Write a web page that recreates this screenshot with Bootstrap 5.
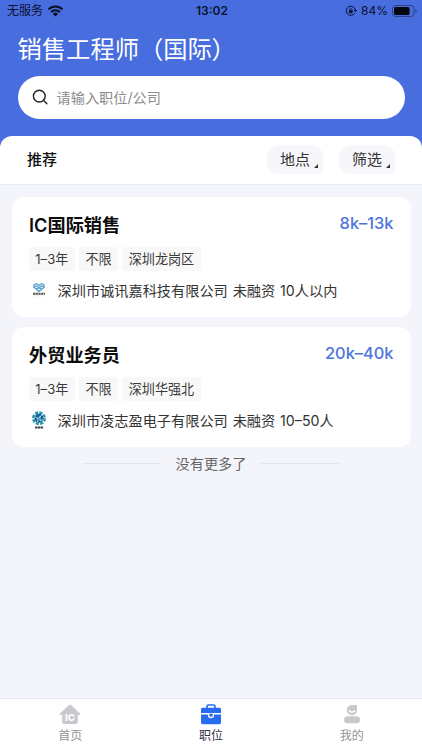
<!DOCTYPE html>
<html lang="zh-CN">
<head>
<meta charset="utf-8">
<meta name="viewport" content="width=device-width, initial-scale=1">
<title>销售工程师（国际）</title>
<link href="https://cdn.jsdelivr.net/npm/bootstrap@5.3.0/dist/css/bootstrap.min.css" rel="stylesheet">
<style>
body{font-family:Inter,"Noto Sans CJK SC",sans-serif;background:#f4f5fa;color:#333;height:750px;overflow:hidden}
svg{display:block;flex:none}
.top-area{background:#486ddf;height:148px}
.status{height:22px;padding:0 5px 0 7px;font-size:12px;color:#0b1230;display:grid;grid-template-columns:1fr auto 1fr}
.page-title{font-size:24.3px;line-height:32px;margin:11px 17.5px 0;font-weight:400}
.page-title span{letter-spacing:-.5px}
.search{height:43.5px;margin:10.5px 17.5px 0;padding-left:14px;font-size:14.2px;color:#8c8c8c}
.search span{margin-left:9px}
.filters{height:49px;margin-top:-12.5px;border-radius:12px 12px 0 0;padding:0 27px;border-bottom:1px solid #e9eaef}
.tab-name{font-size:15px;font-weight:500;color:#111;padding-top:1px}
.pill{width:56px;height:29.5px;border-radius:12px 12px 2px 12px;background:#f7f7fb;font-size:15px;color:#333;padding:1px 5px 0 13px}
.pill svg{margin-top:11px}
.job{height:119.5px;border-radius:12px;padding:15px 17px 0 17.5px}
.jobs{padding:12.5px 11.5px 0;gap:10.5px}
.job-title{font-size:18.2px;line-height:26px;font-weight:700;color:#0c0c0c}
.job-title .latin{font-weight:600}
.pay{font-size:16.4px;line-height:22px;font-weight:500;color:#4c74dd}
.tags{margin-top:9px;gap:4.5px}
.tag{height:24px;padding:0 6.3px;background:#f8f8f8;font-size:13.1px;line-height:24px;color:#3b3b3b;border-radius:2px}
.firm{font-size:14.2px;line-height:20px;margin-top:10px;color:#333;word-spacing:.9px}
.firm svg{margin:0 8.5px 0 0}
.end-line{width:78px;height:1px;background:#e4e5ea}
.the-end{gap:15px;font-size:14.2px;line-height:20px;margin-top:7px;color:#666}
.tabbar{height:52px;border-top:1px solid #e6e6ea;font-size:12px;line-height:16px;color:#929296}
.tabbar svg{margin:5px auto 3px}
.tabbar .on{color:#33344a}
</style>
<script src="https://cdn.jsdelivr.net/npm/bootstrap@5.3.0/dist/js/bootstrap.bundle.min.js"></script>
</head>
<body class="d-flex flex-column">
<header class="top-area flex-shrink-0">
  <div class="status align-items-center">
    <div class="d-flex align-items-center gap-1"><span>无服务</span>
      <svg width="17" height="12" viewBox="0 0 17 12" fill="none" stroke="#080d20" stroke-width="2"><path d="M1.5 4.4a10 10 0 0 1 14 0M4 7a6.4 6.4 0 0 1 9 0"/><path d="M8.5 11.5 5.9 8.9a3.7 3.7 0 0 1 5.2 0z" fill="#080d20" stroke="none"/></svg>
    </div>
    <div class="fw-semibold time">13:02</div>
    <div class="d-flex align-items-center justify-content-end">
      <svg width="12" height="12" viewBox="0 0 12 12" fill="none" stroke="#0b1230"><path d="M9.8 8.2A4.6 4.6 0 1 1 10.4 5"/><path d="M8.7 5h3.3l-1.6 2.2z" fill="#0b1230" stroke="none"/><path d="M4.7 5.5V4.7a1.1 1.1 0 0 1 2.2 0v.8" stroke-width=".8"/><rect x="3.9" y="5.3" width="3.8" height="3" rx=".5" fill="#0b1230" stroke="none"/></svg>
      <span class="ms-1">84%</span>
      <svg class="ms-1" width="25" height="12" viewBox="0 0 25 12"><rect x=".5" y=".5" width="21.5" height="11" rx="3" fill="none" stroke="#2c438c"/><rect x="2" y="2" width="15.5" height="8" rx="1.6" fill="#05070f"/><path d="M23.3 4v4q1.4-.6 1.4-2t-1.4-2" fill="#2c438c"/></svg>
    </div>
  </div>
  <h1 class="page-title text-white">销售工程师（国<span>际</span>）</h1>
  <div class="search bg-white rounded-pill d-flex align-items-center">
    <svg width="16" height="16" viewBox="0 0 16 16" fill="none" stroke="#222" stroke-width="1.4" stroke-linecap="round"><circle cx="7.3" cy="7.1" r="5.9"/><path d="m11.6 11.4 3.3 3.3"/></svg>
    <span>请输入职位/公司</span>
  </div>
</header>
<section class="filters bg-white flex-shrink-0 d-flex align-items-center">
  <div class="tab-name me-auto">推荐</div>
  <div class="d-flex gap-3">
    <div class="pill d-flex align-items-center justify-content-between">地点<svg width="4" height="4"><path d="M4 0v4H0z" fill="#333"/></svg></div>
    <div class="pill d-flex align-items-center justify-content-between">筛选<svg width="4" height="4"><path d="M4 0v4H0z" fill="#333"/></svg></div>
  </div>
</section>
<main class="jobs d-flex flex-column">
  <article class="job bg-white">
    <div class="d-flex justify-content-between"><h2 class="job-title m-0"><span class="latin">IC</span>国际销售</h2><div class="pay">8k–13k</div></div>
    <div class="tags d-flex"><span class="tag">1–3年</span><span class="tag">不限</span><span class="tag">深圳龙岗区</span></div>
    <div class="firm d-flex align-items-center">
      <svg width="20" height="20" viewBox="0 0 20 20"><path d="M10 10.5 4.8 6.2 5 3.7l2.5-1.1L10 4.5l2.5-1.9L15 3.7l.2 2.5zM5 6l2.5-1.2L10 7l2.5-2.2L15 6M7.5 8 10 7l2.5 1" fill="#e3f1f8" stroke="#4d9cc8" stroke-width="1.1"/><path d="M4 12.8h12" stroke="#555" stroke-width="2" stroke-dasharray="2.2 .5"/><path d="M4 14.8h12" stroke="#e9dede" stroke-width=".7"/></svg>
      <span>深圳市诚讯嘉科技有限公司 未融资 10人以内</span></div>
  </article>
  <article class="job bg-white">
    <div class="d-flex justify-content-between"><h2 class="job-title m-0">外贸业务员</h2><div class="pay">20k–40k</div></div>
    <div class="tags d-flex"><span class="tag">1–3年</span><span class="tag">不限</span><span class="tag">深圳华强北</span></div>
    <div class="firm d-flex align-items-center">
      <svg width="20" height="20" viewBox="0 0 20 20"><circle cx="10" cy="7.2" r="5.8" fill="none" stroke="#2599ad" stroke-width="2.4" stroke-dasharray="3.2 1.3"/><circle cx="10" cy="7.2" r="4.6" fill="#19639b"/><path d="m6 6 3 1.5L8.5 11M9 7.5l4-3.5M11 5v5l3-1.5" fill="none" stroke="#b9e2ec" stroke-width=".9"/><path d="M6 16.5h8.5" stroke="#444" stroke-width="2" stroke-dasharray="2.4 .4"/></svg>
      <span>深圳市凌志盈电子有限公司 未融资 10–50人</span></div>
  </article>
</main>
<div class="the-end d-flex align-items-center justify-content-center"><i class="end-line"></i><span>没有更多了</span><i class="end-line"></i></div>
<nav class="tabbar bg-white flex-shrink-0 row g-0 text-center mt-auto">
  <div class="col-4"><svg width="22" height="21" viewBox="0 0 22 21"><path d="M10 1.1a1.5 1.5 0 0 1 2 0l9 8.3q1 1.4-.6 1.6h-1.6v7.3q0 1.7-1.7 1.7H4.9q-1.7 0-1.7-1.7V11H1.6Q0 10.8 1 9.4z" fill="#c8c9cf"/><text x="11" y="17" text-anchor="middle" font-size="9.5" font-weight="800" fill="#fff">IC</text></svg>首页</div>
  <div class="col-4 on"><svg width="20" height="21" viewBox="0 0 20 21"><path d="M6 4V2.5Q6 1 7.5 1h5Q14 1 14 2.5V4" fill="none" stroke="#286bf3" stroke-width="1.6"/><path d="M1.5 3.8h17Q20 3.8 20 5.3V9H0V5.3q0-1.5 1.5-1.5M0 10.6h20v8q0 1.6-1.6 1.6H1.6Q0 20.2 0 18.6z" fill="#286bf3"/><path d="M7.6 9.8v1.7q0 2 2.4 2t2.4-2V9.8" fill="#286bf3" stroke="#fff" stroke-width="1.3"/></svg>职位</div>
  <div class="col-4"><svg width="18" height="21" viewBox="0 0 18 21"><path d="M8.8 1H14v5.5A5.1 5.1 0 1 1 8.8 1" fill="#c8c9cf"/><path d="M5.8 6.5q3.2 3.3 6.4 0" fill="none" stroke="#fff" stroke-width="1.3"/><rect x="1" y="12.3" width="16" height="7" rx="3.5" fill="#c8c9cf"/></svg>我的</div>
</nav>
</body>
</html>
